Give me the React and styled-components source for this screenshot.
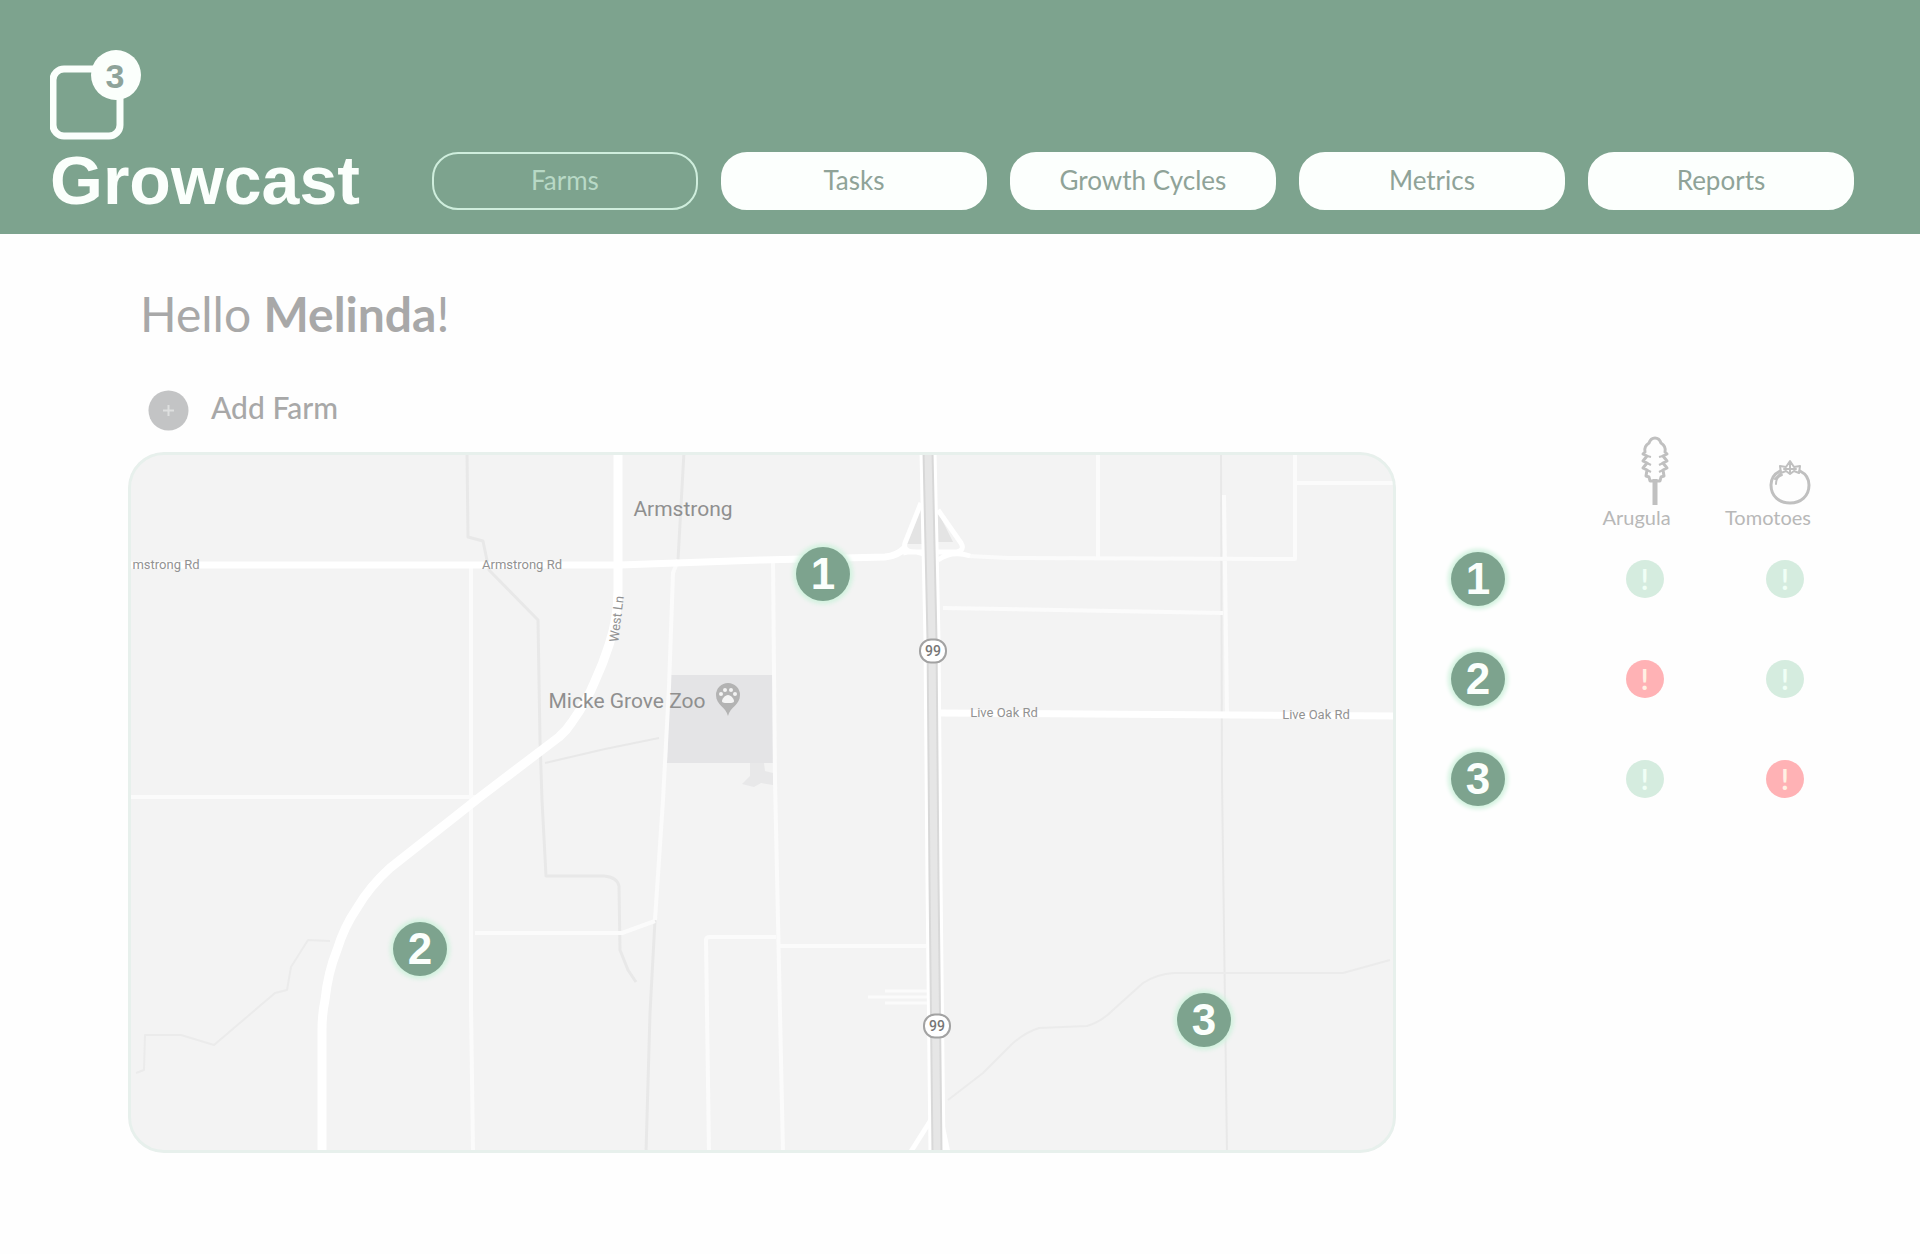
import React from "react";
import styled, { createGlobalStyle } from "styled-components";

const green = "#7da38e";

const GlobalStyle = createGlobalStyle`
  * { box-sizing: border-box; }
  body {
    margin: 0;
    background: #fefefe;
    font-family: Lato, "Open Sans", sans-serif;
    color: #a8a8a8;
  }
`;

const Header = styled.header`
  display: flex;
  align-items: flex-end;
  gap: 72px;
  min-height: 234px;
  padding: 24px 66px 24px 50px;
  background: ${green};
`;

const Brand = styled.div`
  display: flex;
  flex-direction: column;
  gap: 10px;
  color: #fbfffc;
`;

const BrandName = styled.span`
  font: bold 68px/60px "Liberation Sans", Arial, sans-serif;
`;

const Nav = styled.nav`
  display: flex;
  flex: 1;
  gap: 23px;
`;

const NavLink = styled.a`
  flex: 1;
  height: 58px;
  border: 2px solid ${(p) => (p.$active ? "#cfeedd" : "#fcfffd")};
  border-radius: 26px;
  background: ${(p) => (p.$active ? "transparent" : "#fcfffd")};
  color: ${(p) => (p.$active ? "#b8d9c6" : "#8fa398")};
  font-size: 26px;
  line-height: 52px;
  text-align: center;
  text-decoration: none;
  white-space: nowrap;
`;

const Main = styled.main`
  display: grid;
  grid-template-columns: 1268fr 360fr;
  gap: 55px;
  align-items: start;
  padding: 0 109px 100px 128px;
`;

const FarmColumn = styled.section`
  display: flex;
  flex-direction: column;
  align-items: flex-start;
  padding-top: 52px;
`;

const Greeting = styled.h1`
  margin: 0 0 48px;
  padding-left: 12px;
  font-size: 48px;
  line-height: 56px;
  font-weight: 400;
`;

const AddButton = styled.button`
  display: flex;
  align-items: flex-start;
  gap: 22px;
  height: 40px;
  margin: 0 0 22px 20px;
  padding: 0;
  border: 0;
  background: none;
  color: inherit;
  font: 500 30px/34px Lato, sans-serif;
  cursor: pointer;
`;

const MapFrame = styled.div`
  position: relative;
  width: 100%;
  aspect-ratio: 1268 / 701;
  overflow: hidden;
  border-radius: 36px;
  background: #f3f3f3;

  &::after {
    content: "";
    position: absolute;
    inset: 0;
    border: 3px solid #e7f0ec;
    border-radius: 36px;
  }
`;

const MapDrawing = styled.svg`
  display: block;
  width: 100%;
  height: 100%;
`;

const Placed = styled.span`
  position: absolute;
  left: ${(p) => ((p.$x - 128) / 1268) * 100}%;
  top: ${(p) => ((p.$y - 452) / 701) * 100}%;
  transform: translate(-50%, -50%) rotate(${(p) => p.$turn || 0}deg);
`;

const PlaceLabel = styled(Placed)`
  color: #8f8f8f;
  font: 21px/24px Roboto, sans-serif;
  white-space: nowrap;
`;

const RoadLabel = styled(Placed)`
  color: #929292;
  font: 13px/16px Roboto, sans-serif;
  white-space: nowrap;
`;

const Shield = styled(Placed)`
  width: 28px;
  height: 25px;
  border: 2px solid #a2a2a2;
  border-radius: 12px;
  background: #fff;
  color: #777;
  font: 500 14px/21px Roboto, sans-serif;
  text-align: center;
`;

const Marker = styled.span`
  display: block;
  width: 54px;
  height: 54px;
  border-radius: 50%;
  background: ${green};
  box-shadow: 0 0 4px 3px #d2f2df;
  color: #fbfffc;
  font: bold 44px/54px "Liberation Sans", Arial, sans-serif;
  text-align: center;
`;

const StatusTable = styled.table`
  width: 100%;
  margin-top: 202px;
  border-collapse: collapse;
  table-layout: fixed;
`;

const HeadCell = styled.th`
  width: ${(p) => p.$width};
  height: 93px;
  padding: 0;
  vertical-align: bottom;
  font-weight: 400;
`;

const Crop = styled.span`
  display: flex;
  flex-direction: column;
  align-items: flex-end;
  font-size: 20px;
  line-height: 24px;
  color: #b8b8b8;
`;

const RowHead = styled.th`
  height: 100px;
  padding: 0;
`;

const StatusCell = styled.td`
  height: 100px;
  padding: 0 7px 0 0;
`;

const Status = styled.span`
  display: block;
  width: 38px;
  height: 38px;
  margin-left: auto;
  border-radius: 50%;
  background: ${(p) => (p.$alert ? "#ffb2b5" : "#d5ecdf")};
  color: ${(p) => (p.$alert ? "#fff1e4" : "#f0fff6")};
  font: bold 28px/38px Lato, sans-serif;
  text-align: center;
`;

const LogoIcon = () => (
  <svg width="92" height="90" viewBox="50 50 92 90" aria-hidden="true">
    <rect x="53" y="69" width="67" height="67" rx="11" fill="none" stroke="#fbfffc" strokeWidth="7" />
    <circle cx="116" cy="75" r="25" fill="#fbfffc" />
    <text x="115" y="88" textAnchor="middle" fill="#8ea39a" fontFamily="Liberation Sans, Arial, sans-serif" fontWeight="bold" fontSize="34">3</text>
  </svg>
);

const PlusIcon = () => (
  <svg width="41" height="41" viewBox="0 0 41 41" aria-hidden="true">
    <circle cx="20.5" cy="20.5" r="20" fill="#c3c4c5" />
    <path d="M20.5 15v11M15 20.5h11" stroke="#dedfdf" strokeWidth="2" />
  </svg>
);

const ArugulaIcon = () => (
  <svg width="32" height="69" viewBox="0 0 32 69" fill="none" stroke="#c0c0c0" strokeWidth="3" strokeLinejoin="round" aria-hidden="true">
    <path d="M16 2c-3 0-5 2-6 5-3 2-5 5-4 9l-2 2 4 2-4 5 4 2-4 5 4 2-1 6 3 1 1 4h10l1-4 3-1-1-6 4-2-4-5 4-2-4-5 4-2-2-2c1-4-1-7-4-9-1-3-3-5-6-5z" />
    <path d="M8 20l4 1M8 27l4 2M8 34l4 2M24 20l-4 1M24 27l-4 2M24 34l-4 2" strokeWidth="2" />
    <path d="M16 43v26" strokeWidth="5" />
  </svg>
);

const TomatoIcon = () => (
  <svg width="42" height="46" viewBox="0 0 42 46" fill="none" stroke="#c0c0c0" strokeWidth="3" strokeLinejoin="round" strokeLinecap="round" aria-hidden="true">
    <path d="M11 12C5 15 2 20 2 26c0 11 8 18 19 18s19-7 19-18c0-6-3-11-9-14" />
    <path d="M11 7l6 1 4-6 4 6 6-1-1 7-5-2-4 3-4-3-5 2zM21 3v11M15 10h12M7 25c0-5 3-8 6-9M6 20l6-6" strokeWidth="2" />
  </svg>
);

const MapArt = () => (
  <MapDrawing viewBox="128 452 1268 701" preserveAspectRatio="none" fill="none" strokeLinejoin="round" aria-hidden="true">
    {/* park */}
    <path d="M670 675h103v88h-83l-23 0z" fill="#e4e4e6" />
    <path d="M750 763h14l1 8 8 2v12l-12-2-7 4-12-3 8-8z" fill="#e8e8e9" />
    {/* creeks and canals */}
    <g stroke="#e8e8e8" strokeWidth="3">
      <path d="M467 452l1 85 15 4 6 29 49 50 2 120 2 60 4 76h58q13 1 15 10l1 64 8 20 8 12" />
      <path d="M684 452l-6 108M655 920l-5 93-4 140" />
      <path d="M545 763l60-14 54-11M1221 452l1 328 5 373" strokeWidth="2" />
      <path d="M948 1100l35-27 26-26q14-14 30-19l48-2q14-4 26-16l30-27q14-9 31-10h169l47-13" strokeWidth="2" stroke="#ebebeb" />
      <path d="M136 1073l8-3 1-35h36l33 10 61-52 12-3 4-23 17-27 22 1" strokeWidth="2" stroke="#ebebeb" />
    </g>
    {/* minor roads */}
    <g stroke="#fbfbfb" strokeWidth="4">
      <path d="M471 565v440l2 148M128 797h350M475 933h147l33-12" />
      <path d="M678 560l-5 13-4 114-6 113-8 120" />
      <path d="M773 560l2 220 8 373M709 1153l-3-213q0-3 4-3h66M778 946h148" />
      <path d="M868 997h60M885 991h43M885 1003h43" strokeWidth="3" />
      <path d="M1098 452v106M968 556l40 2 287 1V452M1296 483h100M943 608l280 5M1224 495l3 218" />
    </g>
    {/* arterial roads */}
    <g stroke="#ffffff">
      <path d="M128 565h492l140-5 125-3q12-1 20-9" strokeWidth="7" />
      <path d="M940 713l456 3" strokeWidth="7" />
      <path d="M618 452v138q0 28-9 55-6 19-14 36-8 20-23 41-5 8-13 15l-79 60-90 71q-20 18-33 40-13 19-20 42-9 22-12 50-3 14-3 30v123" strokeWidth="9" />
    </g>
    {/* highway and interchange */}
    <path d="M921 508l-15 36h18v-20h12v18h17l-15-30z" fill="#e4e4e4" />
    <path d="M921 503l-16 40q-2 7 6 9h46q8-2 4-9l-23-33M903 553q14-4 26 4M970 556q-18-6-32 4" stroke="#fff" strokeWidth="5" />
    <path d="M934 1115l-24 38M940 1115l8 38" stroke="#fff" strokeWidth="5" />
    <path d="M928 452l4 188 2 240 3 273" stroke="#fff" strokeWidth="17" />
    <path d="M928 452l4 188 2 240 3 273" stroke="#d8d8d8" strokeWidth="11" />
    <path d="M928 452l4 188 2 240 3 273" stroke="#e6e6e6" strokeWidth="7" />
    {/* zoo pin */}
    <path d="M728 716c-2-9-12-11-12-21a12 12 0 0 1 24 0c0 10-10 12-12 21z" fill="#b3b3b3" />
    <path d="M728 695c3 0 6 4 6 6s-3 2-6 2-6 0-6-2 3-6 6-6z" fill="#f4f4f4" />
    <g fill="#f4f4f4">
      <circle cx="721" cy="694" r="2" />
      <circle cx="725" cy="690" r="2" />
      <circle cx="731" cy="690" r="2" />
      <circle cx="735" cy="694" r="2" />
    </g>
  </MapDrawing>
);

const sections = ["Farms", "Tasks", "Growth Cycles", "Metrics", "Reports"];

const farms = [
  { id: 1, x: 823, y: 574, arugula: false, tomatoes: false },
  { id: 2, x: 420, y: 949, arugula: true, tomatoes: false },
  { id: 3, x: 1204, y: 1020, arugula: false, tomatoes: true },
];

const roads = [
  { name: "mstrong Rd", x: 166, y: 565 },
  { name: "Armstrong Rd", x: 522, y: 565 },
  { name: "West Ln", x: 617, y: 619, turn: -83 },
  { name: "Live Oak Rd", x: 1004, y: 713 },
  { name: "Live Oak Rd", x: 1316, y: 715 },
];

export default function App() {
  return (
    <>
      <GlobalStyle />
      <Header>
        <Brand>
          <LogoIcon />
          <BrandName>Growcast</BrandName>
        </Brand>
        <Nav>
          {sections.map((name, i) => (
            <NavLink key={name} href="#" $active={i === 0} aria-current={i === 0 ? "page" : undefined}>
              {name}
            </NavLink>
          ))}
        </Nav>
      </Header>
      <Main>
        <FarmColumn>
          <Greeting>
            Hello <b>Melinda</b>!
          </Greeting>
          <AddButton type="button">
            <PlusIcon />
            Add Farm
          </AddButton>
          <MapFrame>
            <MapArt />
            <PlaceLabel $x={683} $y={509}>Armstrong</PlaceLabel>
            <PlaceLabel $x={627} $y={701}>Micke Grove Zoo</PlaceLabel>
            {roads.map((r) => (
              <RoadLabel key={r.name + r.x} $x={r.x} $y={r.y} $turn={r.turn}>{r.name}</RoadLabel>
            ))}
            <Shield $x={933} $y={651}>99</Shield>
            <Shield $x={937} $y={1026}>99</Shield>
            {farms.map((f) => (
              <Placed key={f.id} $x={f.x} $y={f.y}>
                <Marker>{f.id}</Marker>
              </Placed>
            ))}
          </MapFrame>
        </FarmColumn>
        <StatusTable>
          <thead>
            <tr>
              <HeadCell as="td" $width="15%" />
              <HeadCell scope="col" $width="46%">
                <Crop><ArugulaIcon />Arugula</Crop>
              </HeadCell>
              <HeadCell scope="col" $width="39%">
                <Crop><TomatoIcon />Tomotoes</Crop>
              </HeadCell>
            </tr>
          </thead>
          <tbody>
            {farms.map((f) => (
              <tr key={f.id}>
                <RowHead scope="row"><Marker>{f.id}</Marker></RowHead>
                <StatusCell><Status $alert={f.arugula}>!</Status></StatusCell>
                <StatusCell><Status $alert={f.tomatoes}>!</Status></StatusCell>
              </tr>
            ))}
          </tbody>
        </StatusTable>
      </Main>
    </>
  );
}
